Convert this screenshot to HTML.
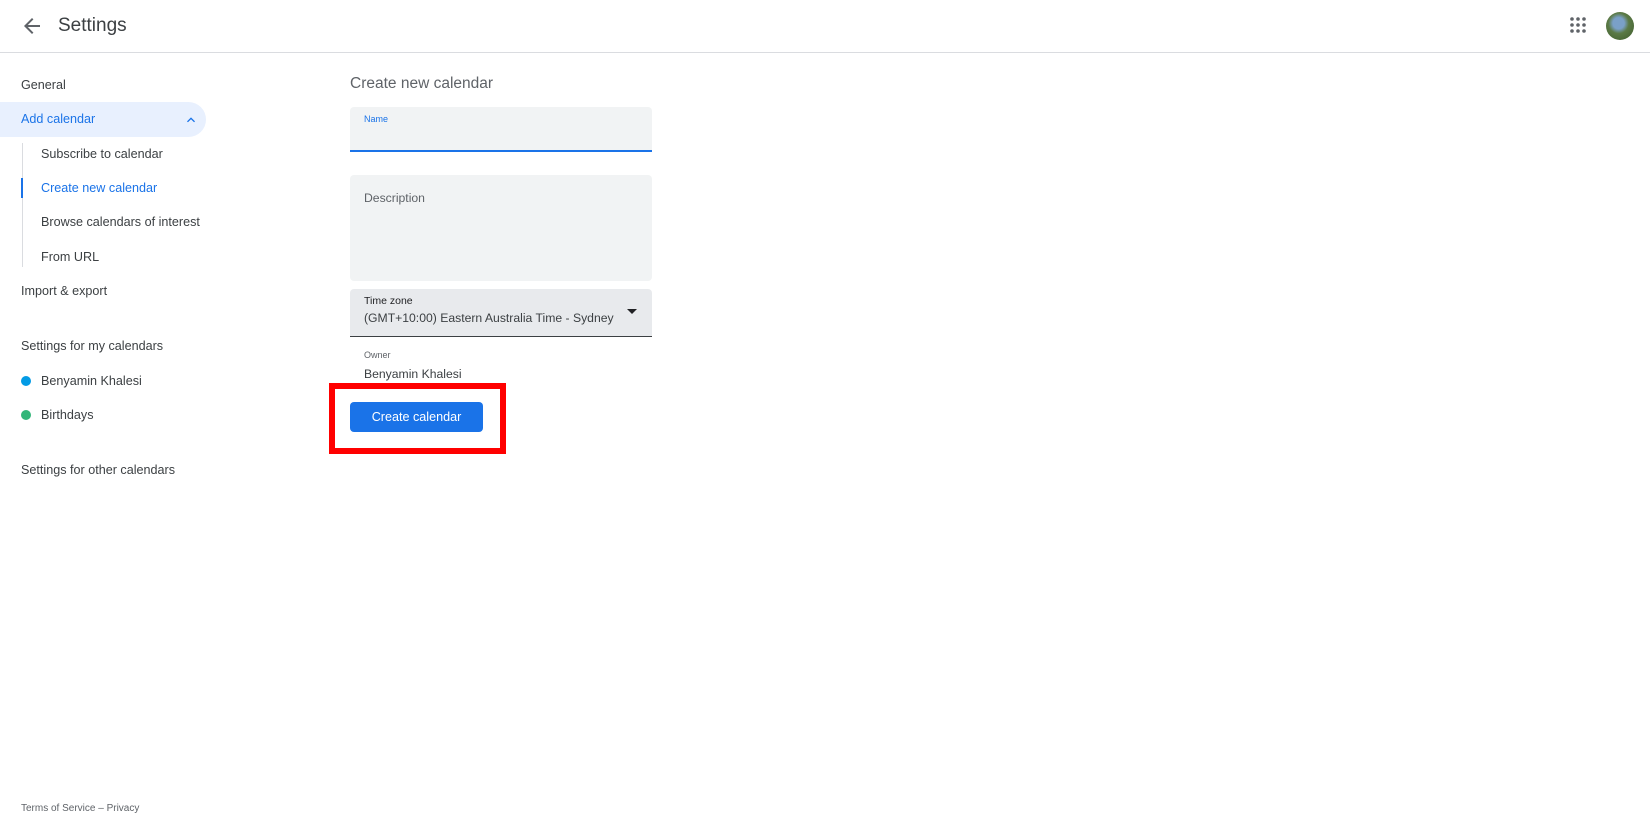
<!DOCTYPE html>
<html><head><meta charset="utf-8"><style>
*{box-sizing:border-box;margin:0;padding:0}
body{width:1650px;height:822px;background:#fff;font-family:"Liberation Sans",Arial,sans-serif;color:#3c4043;position:relative;overflow:hidden}
.a{position:absolute;white-space:nowrap}
.hdr{position:absolute;left:0;top:0;width:1650px;height:53px;border-bottom:1px solid #dadce0}
.side{font-size:12.6px;color:#3c4043}
.blue{color:#1a73e8}
</style></head><body>
<div class="hdr"></div>
<svg class="a" style="left:20px;top:14px" width="24" height="24" viewBox="0 0 24 24"><path d="M20 11H7.83l5.59-5.59L12 4l-8 8 8 8 1.41-1.41L7.83 13H20v-2z" fill="#5f6368"/></svg>
<div class="a" style="left:58px;top:15px;font-size:19px;color:#3c4043">Settings</div>
<svg class="a" style="left:1568px;top:15px" width="20" height="20" viewBox="0 0 20 20" fill="#5f6368"><circle cx="4" cy="4" r="1.8"/><circle cx="10" cy="4" r="1.8"/><circle cx="16" cy="4" r="1.8"/><circle cx="4" cy="10" r="1.8"/><circle cx="10" cy="10" r="1.8"/><circle cx="16" cy="10" r="1.8"/><circle cx="4" cy="16" r="1.8"/><circle cx="10" cy="16" r="1.8"/><circle cx="16" cy="16" r="1.8"/></svg>
<div class="a" style="left:1606px;top:12px;width:28px;height:28px;border-radius:50%;background:radial-gradient(circle at 45% 40%,#7aa0c8 0 25%,#5b7a46 45%,#3d5a2a 100%)"></div>

<div class="a side" style="left:21px;top:78px">General</div>
<div class="a" style="left:0;top:102px;width:206px;height:35px;background:#e8f0fe;border-radius:0 18px 18px 0"></div>
<div class="a side blue" style="left:21px;top:112px">Add calendar</div>
<svg class="a" style="left:183px;top:112px" width="16" height="16" viewBox="0 0 24 24"><path d="M7.41 15.41L12 10.83l4.59 4.58L18 14l-6-6-6 6z" fill="#1a73e8"/></svg>
<div class="a" style="left:22px;top:143px;width:1px;height:124px;background:#dadce0"></div>
<div class="a" style="left:21px;top:178px;width:2px;height:20px;background:#1a73e8"></div>
<div class="a side" style="left:41px;top:147px">Subscribe to calendar</div>
<div class="a side blue" style="left:41px;top:181px">Create new calendar</div>
<div class="a side" style="left:41px;top:215px">Browse calendars of interest</div>
<div class="a side" style="left:41px;top:250px">From URL</div>
<div class="a side" style="left:21px;top:284px">Import &amp; export</div>
<div class="a side" style="left:21px;top:339px">Settings for my calendars</div>
<div class="a" style="left:21px;top:376px;width:10px;height:10px;border-radius:50%;background:#039be5"></div>
<div class="a side" style="left:41px;top:374px">Benyamin Khalesi</div>
<div class="a" style="left:21px;top:410px;width:10px;height:10px;border-radius:50%;background:#33b679"></div>
<div class="a side" style="left:41px;top:408px">Birthdays</div>
<div class="a side" style="left:21px;top:463px">Settings for other calendars</div>

<div class="a" style="left:350px;top:75px;font-size:15.5px;color:#5f6368">Create new calendar</div>
<div class="a" style="left:350px;top:107px;width:302px;height:45px;background:#f1f3f4;border-radius:4px 4px 0 0;border-bottom:2px solid #1a73e8"></div>
<div class="a" style="left:364px;top:114px;font-size:9px;color:#1a73e8">Name</div>
<div class="a" style="left:350px;top:175px;width:302px;height:106px;background:#f1f3f4;border-radius:4px"></div>
<div class="a" style="left:364px;top:191px;font-size:12.2px;color:#5f6368">Description</div>
<div class="a" style="left:350px;top:289px;width:302px;height:48px;background:#e8eaed;border-radius:4px 4px 0 0;border-bottom:1px solid #3c4043"></div>
<div class="a" style="left:364px;top:295px;font-size:10.5px;color:#202124">Time zone</div>
<div class="a" style="left:364px;top:311px;font-size:12.2px;color:#3c4043">(GMT+10:00) Eastern Australia Time - Sydney</div>
<svg class="a" style="left:625px;top:307px" width="14" height="10" viewBox="0 0 14 10"><path d="M2 2h10L7 7z" fill="#202124"/></svg>
<div class="a" style="left:364px;top:350px;font-size:9px;color:#5f6368">Owner</div>
<div class="a" style="left:364px;top:367px;font-size:12.2px;color:#3c4043">Benyamin Khalesi</div>
<div class="a" style="left:329px;top:383px;width:177px;height:71px;border:6px solid #f00"></div>
<div class="a" style="left:350px;top:402px;width:133px;height:30px;background:#1a73e8;border-radius:4px;color:#fff;font-size:12.6px;text-align:center;line-height:30px">Create calendar</div>

<div class="a" style="left:21px;top:803px;font-size:10px;color:#5f6368">Terms of Service – Privacy</div>
</body></html>
